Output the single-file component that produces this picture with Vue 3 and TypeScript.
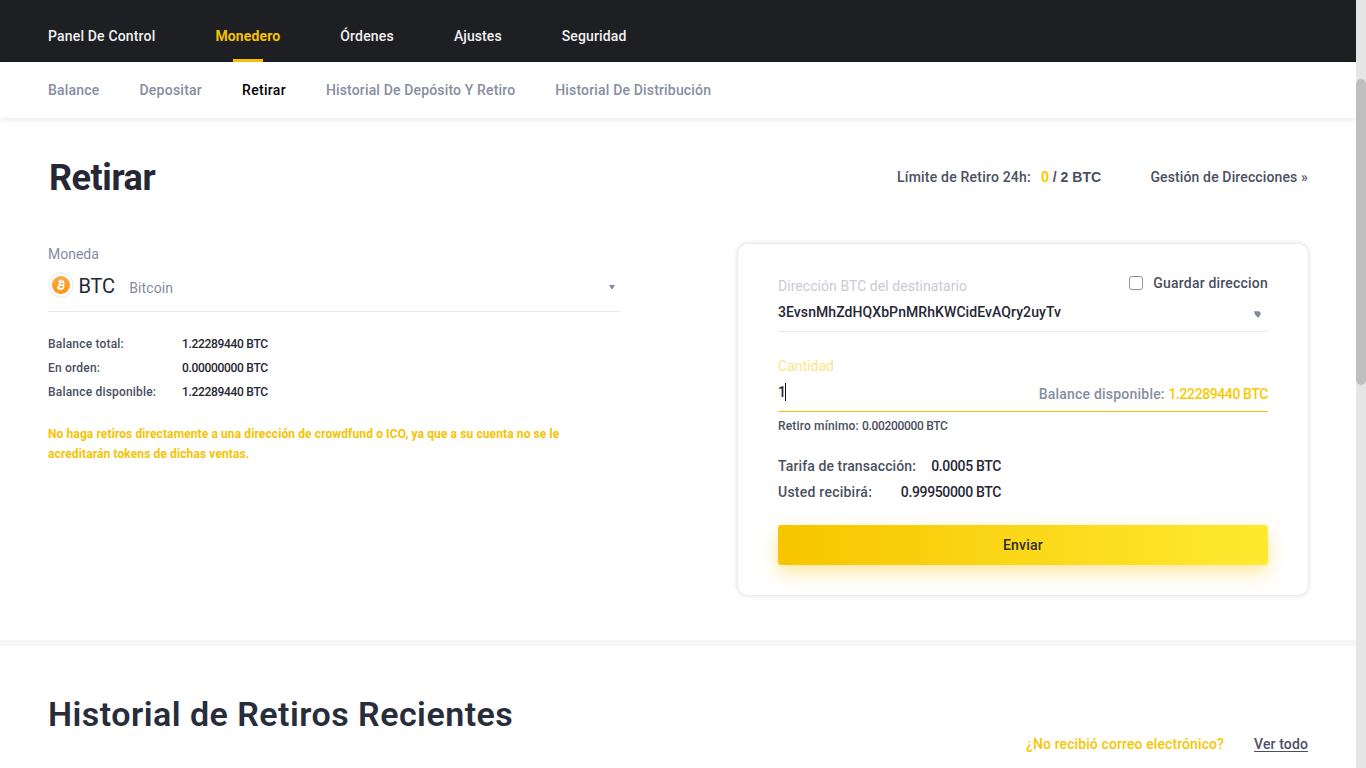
<script setup lang="ts">
import { ref } from 'vue'

interface NavItem {
  label: string
  tracking: number
  active?: boolean
}

interface BalanceRow {
  label: string
  value: string
}

const mainNav: NavItem[] = [
  { label: 'Panel De Control', tracking: 0.17 },
  { label: 'Monedero', tracking: 0.12, active: true },
  { label: 'Órdenes', tracking: 0.2 },
  { label: 'Ajustes', tracking: 0.08 },
  { label: 'Seguridad', tracking: 0.15 },
]

const subNav: NavItem[] = [
  { label: 'Balance', tracking: 0.19 },
  { label: 'Depositar', tracking: 0.25 },
  { label: 'Retirar', tracking: 0.3, active: true },
  { label: 'Historial De Depósito Y Retiro', tracking: 0.15 },
  { label: 'Historial De Distribución', tracking: 0.165 },
]

const balances: BalanceRow[] = [
  { label: 'Balance total:', value: '1.22289440 BTC' },
  { label: 'En orden:', value: '0.00000000 BTC' },
  { label: 'Balance disponible:', value: '1.22289440 BTC' },
]

const fees: BalanceRow[] = [
  { label: 'Tarifa de transacción:', value: '0.0005 BTC' },
  { label: 'Usted recibirá:', value: '0.99950000 BTC' },
]

const saveAddress = ref(false)
</script>

<template>
  <div class="window">
    <div class="page">
      <nav class="main-nav">
        <a
          v-for="item in mainNav"
          :key="item.label"
          :class="{ active: item.active }"
          :style="{ letterSpacing: item.tracking + 'px' }"
        >{{ item.label }}</a>
      </nav>
      <nav class="sub-nav">
        <a
          v-for="item in subNav"
          :key="item.label"
          :class="{ active: item.active }"
          :style="{ letterSpacing: item.tracking + 'px' }"
        >{{ item.label }}</a>
      </nav>

      <main class="withdraw">
        <header class="title-row">
          <h1>Retirar</h1>
          <div class="limit">
            <span>Límite de Retiro 24h:</span>
            <b><em>0</em> / 2 BTC</b>
          </div>
          <a class="manage">Gestión de Direcciones »</a>
        </header>

        <div class="columns">
          <section class="coin">
            <div class="coin-label">Moneda</div>
            <div class="coin-select">
              <svg class="coin-icon" viewBox="0 0 26 26" width="26" height="26">
                <defs>
                  <linearGradient id="coin" x1="0" y1="0" x2="0" y2="1">
                    <stop offset="0" stop-color="#f9aa4b" />
                    <stop offset="1" stop-color="#fd930d" />
                  </linearGradient>
                </defs>
                <circle cx="13" cy="13" r="12.2" fill="#fff" stroke="#e8e8e8" stroke-width="1" />
                <circle cx="13" cy="13" r="9" fill="url(#coin)" />
                <g transform="rotate(13 13 13)" fill="none" stroke="#fff">
                  <path d="M9.6 9.6H13.8a1.7 1.7 0 0 1 0 3.4H11.4M13.8 13h.4a1.75 1.75 0 0 1 0 3.5H9.6M11.3 9.6v6.9" stroke-width="1.6" />
                  <path d="M11.9 7.7v2M14 7.7v2M11.9 16.4v2M14 16.4v2" stroke-width="1.2" />
                </g>
              </svg>
              <span class="symbol">BTC</span>
              <span class="name">Bitcoin</span>
              <svg class="caret" viewBox="0 0 6 4" width="6" height="4"><path d="M0 0h6L3.6 4H2.4z" /></svg>
            </div>
            <dl class="balances">
              <div v-for="row in balances" :key="row.label">
                <dt>{{ row.label }}</dt>
                <dd>{{ row.value }}</dd>
              </div>
            </dl>
            <p class="warning">No haga retiros directamente a una dirección de crowdfund o ICO, ya que a su cuenta no se le<br>acreditarán tokens de dichas ventas.</p>
          </section>

          <section class="card">
            <div class="address-head">
              <span class="address-label">Dirección BTC del destinatario</span>
              <label class="save">
                <input v-model="saveAddress" type="checkbox">
                <span>Guardar direccion</span>
              </label>
            </div>
            <div class="address">
              <span>3EvsnMhZdHQXbPnMRhKWCidEvAQry2uyTv</span>
              <svg viewBox="0 0 7 7" width="7" height="7"><path d="M0 .3H5L7 2.2 4.4 6.9 1 3.6z" /></svg>
            </div>
            <div class="amount-label">Cantidad</div>
            <div class="amount">
              <span class="typed">1</span>
              <span class="available">Balance disponible: <em>1.22289440 BTC</em></span>
            </div>
            <div class="minimum">Retiro mínimo: <span>0.00200000 BTC</span></div>
            <dl class="fees">
              <div v-for="row in fees" :key="row.label">
                <dt>{{ row.label }}</dt>
                <dd>{{ row.value }}</dd>
              </div>
            </dl>
            <button type="button">Enviar</button>
          </section>
        </div>
      </main>

      <section class="history">
        <h2>Historial de Retiros Recientes</h2>
        <div class="history-links">
          <a class="mail">¿No recibió correo electrónico?</a>
          <a class="all">Ver todo</a>
        </div>
      </section>
    </div>
    <div class="scrollbar"><div class="thumb"></div></div>
  </div>
</template>

<style>
body {
  margin: 0;
  overflow: hidden;
}
</style>

<style scoped>
* {
  box-sizing: border-box;
}
.window {
  display: flex;
  width: 1366px;
  height: 768px;
  overflow: hidden;
  background: #fff;
  font: 500 14px/20px Roboto, "Liberation Sans", sans-serif;
  color: #4a505f;
  white-space: nowrap;
}
.page {
  width: 1356px;
  flex: none;
}
.main-nav {
  display: flex;
  gap: 60px;
  height: 62px;
  padding: 26px 48px 0;
  background: #1e1f23;
  border-bottom: 1px solid #1a181e;
  color: #f1f1f2;
}
.main-nav a {
  position: relative;
}
.main-nav .active {
  color: #f5c300;
  font-weight: 700;
}
.main-nav .active::after {
  content: "";
  position: absolute;
  left: 18px;
  top: 33px;
  width: 30px;
  height: 3px;
  background: #f5c000;
}
.sub-nav {
  display: flex;
  gap: 40px;
  height: 56px;
  padding: 18px 48px 0;
  background: #fff;
  box-shadow: 0 1px 6px rgba(0, 0, 0, 0.11);
  color: #868ea1;
}
.sub-nav .active {
  color: #000;
}
.withdraw {
  height: 528px;
  padding: 35px 48px 0;
  border-bottom: 6px solid #f5f5f5;
}
.title-row {
  display: flex;
  height: 50px;
}
h1 {
  flex: 1;
  margin: 0;
  padding-left: 1px;
  font-size: 36px;
  line-height: 50px;
  font-weight: 700;
  letter-spacing: -0.45px;
  color: #252734;
}
.limit {
  display: flex;
  gap: 10px;
  margin: 14px 49.5px 0 0;
}
.limit span {
  letter-spacing: 0.2px;
}
.limit b {
  width: 60px;
  font-family: "Liberation Sans", sans-serif;
}
.limit em {
  font-family: Roboto, sans-serif;
  font-style: normal;
  color: #fbc800;
}
.manage {
  margin-top: 14px;
  letter-spacing: 0.13px;
}
.columns {
  display: flex;
  justify-content: space-between;
  align-items: flex-start;
  margin-top: 41px;
}
.coin {
  width: 573px;
}
.coin-label {
  font-weight: 400;
  color: #848c9f;
}
.coin-select {
  display: flex;
  height: 48px;
  padding-top: 8px;
  border-bottom: 1px solid #e8e8e9;
}
.coin-icon {
  flex: none;
}
.symbol {
  width: 50px;
  margin: 2px 0 0 4.6px;
  font-size: 20px;
  line-height: 24px;
  font-weight: 400;
  letter-spacing: -0.2px;
  color: #252734;
}
.name {
  flex: 1;
  margin: 6px 0 0 0.6px;
  font-weight: 400;
  letter-spacing: 0.12px;
  color: #848c9f;
}
.caret {
  margin: 13px 6px 0 0;
  fill: #848c9f;
}
.balances {
  margin: 20px 0 0;
  font-size: 12px;
  line-height: 24px;
}
.balances div {
  display: flex;
}
.balances dt {
  width: 134px;
  letter-spacing: 0.19px;
}
.balances dd {
  margin: 0;
  letter-spacing: -0.31px;
  color: #252734;
}
.warning {
  margin: 20px 0 0;
  font-size: 12px;
  font-weight: 700;
  letter-spacing: 0.107px;
  color: #f5c300;
}
.card {
  width: 570px;
  height: 351px;
  padding: 29px 40px 0;
  border-radius: 10px;
  background: #fff;
  box-shadow: 0 0 0 1px #ececec, 0 0 5px 1px rgba(0, 0, 0, 0.11);
}
.address-head {
  display: flex;
  justify-content: space-between;
}
.address-label {
  margin-top: 3px;
  font-weight: 400;
  letter-spacing: 0.05px;
  color: #c8cbd3;
}
.save {
  display: flex;
  gap: 10px;
  letter-spacing: 0.2px;
}
.save input {
  appearance: none;
  width: 14px;
  height: 14px;
  margin: 3px 0 0;
  border: 1px solid #8d92a8;
  border-radius: 3px;
}
.address {
  display: flex;
  justify-content: space-between;
  height: 36px;
  padding-top: 6px;
  border-bottom: 1px solid #e8e8ec;
  letter-spacing: 0.076px;
  color: #252734;
}
.address svg {
  margin: 9px 7px 0 0;
  fill: #7d869b;
}
.amount-label {
  margin-top: 24px;
  font-weight: 400;
  letter-spacing: 0.02px;
  color: #fbe587;
}
.amount {
  display: flex;
  justify-content: space-between;
  height: 36px;
  padding-top: 6px;
  border-bottom: 1px solid #f5c300;
}
.typed {
  width: 8px;
  height: 18px;
  margin-top: 1px;
  line-height: 18px;
  border-right: 1px solid #111;
  letter-spacing: -1px;
  color: #252734;
}
.available {
  margin-top: 2px;
  letter-spacing: 0.21px;
  color: #868ea1;
}
.available em {
  font-style: normal;
  letter-spacing: -0.4px;
  color: #fbc800;
}
.minimum {
  margin-top: 4px;
  font-size: 12px;
  letter-spacing: 0.16px;
}
.minimum span {
  letter-spacing: -0.33px;
}
.fees {
  width: 223px;
  margin: 17px 0 0;
  line-height: 26px;
}
.fees div {
  display: flex;
  justify-content: space-between;
}
.fees dt {
  letter-spacing: 0.11px;
}
.fees div + div dt {
  letter-spacing: 0.24px;
}
.fees dd {
  margin: 0;
  letter-spacing: -0.35px;
  color: #252734;
}
button {
  display: block;
  width: 490px;
  height: 40px;
  margin-top: 20px;
  padding: 0;
  border: 0;
  border-radius: 3px;
  background: linear-gradient(90deg, #f7c500, #feea30);
  box-shadow: 0 7px 18px rgba(253, 196, 20, 0.42);
  color: #2c2d33;
  font: inherit;
  letter-spacing: 0.21px;
}
.history {
  display: flex;
  justify-content: space-between;
  padding: 43px 48px 0;
}
h2 {
  margin: 0;
  font-size: 34px;
  line-height: 50px;
  font-weight: 600;
  letter-spacing: 0.47px;
  color: #282d3b;
}
.history-links {
  display: flex;
  gap: 30px;
  margin-top: 45px;
}
.mail {
  letter-spacing: 0.1px;
  color: #f8c500;
}
.all {
  letter-spacing: 0.13px;
  text-decoration: underline;
  text-decoration-thickness: 1px;
  text-underline-offset: 2px;
}
.scrollbar {
  width: 10px;
  height: 768px;
  padding-top: 79px;
  background: #e5e5e5;
}
.thumb {
  height: 306px;
  border-radius: 5px;
  background: #bfbfbf;
}
</style>
